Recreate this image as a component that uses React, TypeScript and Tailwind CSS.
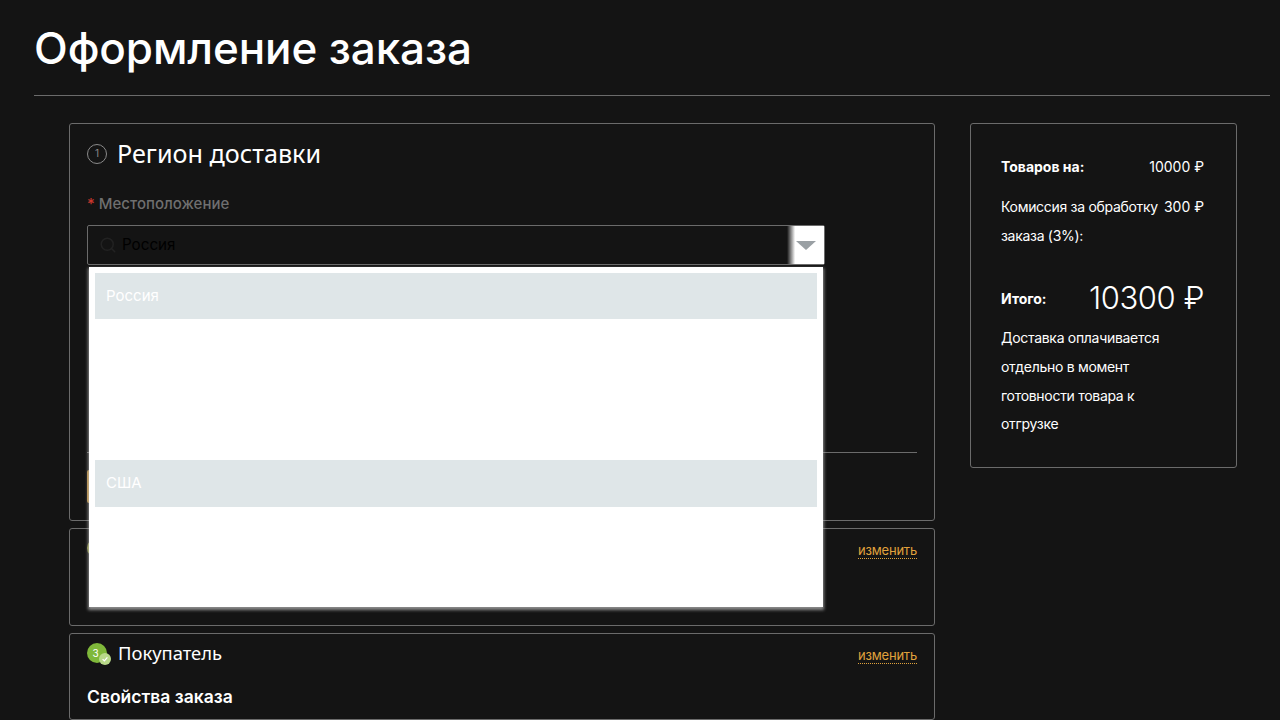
import { Search } from "lucide-react";

function ChangeLink() {
  return (
    <a className="block text-[13px] leading-[16px] tracking-[-0.2px] text-[#e0a23c] border-b border-dotted border-[#e0a23c] font-['Inter',sans-serif]">
      изменить
    </a>
  );
}

function Summary() {
  return (
    <aside className="w-[267px] h-[345px] shrink-0 border border-[#6b6b6b] rounded-[3px] pl-[30px] pr-[32px] pt-[28px] text-[14px] text-white font-['Inter',sans-serif]">
      <div className="flex justify-between items-center h-[28px]">
        <span className="font-bold">Товаров на:</span>
        <span>10000 ₽</span>
      </div>
      <div className="flex justify-between mt-[12px] leading-[29px]">
        <span className="w-[160px] tracking-[-0.3px]">Комиссия за обработку заказа (3%):</span>
        <span>300 ₽</span>
      </div>
      <div className="flex justify-between items-center mt-[26px] h-[44px]">
        <span className="font-bold">Итого:</span>
        <span className="text-[31px] tracking-[-0.4px] font-light">10300 ₽</span>
      </div>
      <p className="w-[170px] mt-[4px] leading-[28.8px] tracking-[-0.3px]">Доставка оплачивается отдельно в момент готовности товара к отгрузке</p>
    </aside>
  );
}

export default function App() {
  return (
    <div className="w-[1280px] h-[720px] overflow-hidden bg-[#141414] pl-[34px] pr-[10px] font-['Inter',sans-serif]">
      <h1 className="pt-[21px] h-[96px] border-b border-[#6b6b6b] text-[44px] leading-[54px] tracking-[-0.1px] font-medium text-white">
        Оформление заказа
      </h1>
      <div className="flex pl-[35px] pt-[27px] gap-[35px] items-start">
        <div className="w-[866px] flex flex-col gap-[7px]">
          <section className="relative h-[398px] border border-[#6b6b6b] rounded-[3px] px-[17px] pt-[13px]">
            <div className="flex items-center gap-[10px] h-[33px]">
              <span className="w-[20px] h-[20px] rounded-full border border-[#8a8a8a] flex items-center justify-center text-[10px] text-[#8a8a8a]">
                1
              </span>
              <h2 className="text-[25.2px] text-white font-['Noto_Sans',sans-serif]">Регион доставки</h2>
            </div>
            <div className="mt-[24px] text-[15px] leading-[20px] font-medium text-[#6f6f6f]">
              <span className="text-[#c8372d]">*</span> Местоположение
            </div>
            <div className="relative mt-[11px] w-[738px] h-[40px] border border-[#6b6b6b] rounded-[2px] flex items-center">
              <Search size={18} strokeWidth={2} className="ml-[11px] text-[#222222]" />
              <span className="ml-[5px] mt-[1px] text-[15.2px] text-black">Россия</span>
              <span className="absolute right-0 top-0 h-full w-[37px] bg-gradient-to-r from-transparent to-white to-[22%] flex items-center justify-end pr-[8px]">
                <span className="w-0 h-0 border-x-[10px] border-x-transparent border-t-[9px] border-t-[#9aa0a4]" />
              </span>
            </div>
            <div className="mt-[187px] h-px bg-[#6b6b6b]" />
            <div className="mt-[17px] w-[100px] h-[33px] rounded-[2px] bg-[#b88a3c]" />
            <div className="absolute left-[19px] top-[143px] w-[734px] h-[340px] bg-white shadow-[0_2px_3px_1px_rgba(190,190,190,0.7)] px-[6px] pt-[6px] z-10 text-[15px] text-white">
              <div className="h-[46px] bg-[#dfe6e8] flex items-center pl-[11px]">Россия</div>
              <div className="h-[141px]" />
              <div className="h-[47px] bg-[#dfe6e8] flex items-center pl-[11px]">США</div>
            </div>
          </section>
          <section className="h-[98px] border border-[#6b6b6b] rounded-[3px] px-[17px] pt-[9px] flex justify-between items-start">
            <span className="w-[20px] h-[20px] rounded-full bg-[#8f9440]" />
            <div className="mt-[4px]">
              <ChangeLink />
            </div>
          </section>
          <section className="h-[87px] border border-[#6b6b6b] rounded-[3px] px-[17px] pt-[7px]">
            <div className="flex justify-between items-center h-[24px]">
              <div className="flex items-center gap-[11px]">
                <span className="relative w-[20px] h-[20px] rounded-full bg-[#7fb83a] flex items-center justify-center pr-[3px] text-[10px] text-white">
                  3
                  <span className="absolute -right-[4px] -bottom-[2px] w-[12px] h-[12px] rounded-full bg-[#b9d98a] flex items-center justify-center">
                    <svg viewBox="0 0 10 10" className="w-[8px] h-[8px]" fill="none" stroke="#fff" strokeWidth="1.6">
                      <path d="M2 5.2 4.2 7.4 8 3" />
                    </svg>
                  </span>
                </span>
                <span className="text-[18.4px] text-white font-['Noto_Sans',sans-serif]">Покупатель</span>
              </div>
              <div className="mt-[5px]">
                <ChangeLink />
              </div>
            </div>
            <div className="mt-[20px] text-[17.5px] leading-[24px] font-semibold text-white">Свойства заказа</div>
          </section>
        </div>
        <Summary />
      </div>
    </div>
  );
}
